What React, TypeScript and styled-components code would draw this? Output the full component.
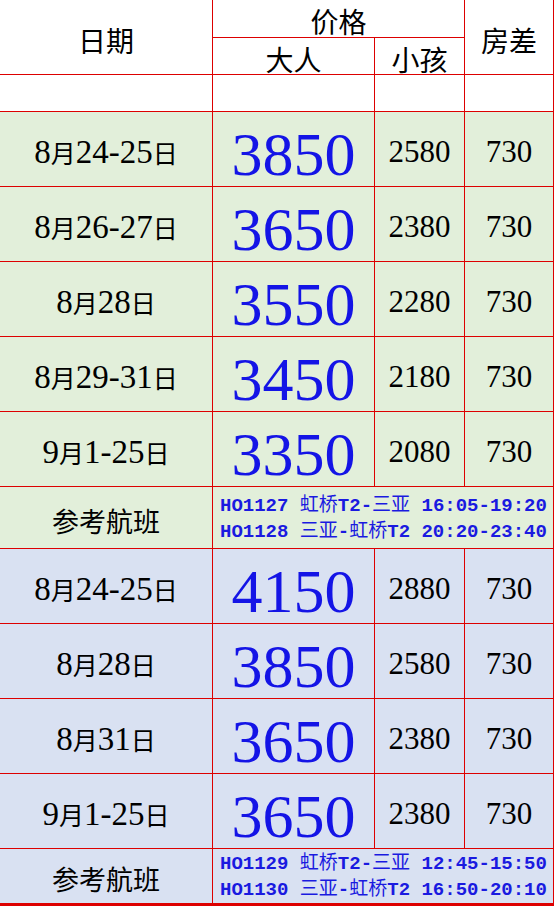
import React from "react";
import styled, { createGlobalStyle } from "styled-components";

const Global = createGlobalStyle`
  html, body { margin: 0; padding: 0; background: #ffffff; }
  body { font-family: "Noto Sans CJK SC", "Liberation Serif", sans-serif; color: #000; }
`;

const RED = "#dd0000";
const GREEN = "#e2efda";
const BLUE = "#d9e1f2";

const Sheet = styled.div`
  display: grid;
  grid-template-columns: 213px 162px 90px 89px;
  grid-template-rows: 38px 37px 37px repeat(5, 75px) 62px repeat(4, 75px) 57px;
  width: 554px;
`;

const Cell = styled.div<{
  $bg?: string;
  $colSpan?: number;
  $rowSpan?: number;
  $thick?: boolean;
  $padTop?: number;
}>`
  box-sizing: border-box;
  display: flex;
  align-items: center;
  justify-content: center;
  padding-top: ${(p) => p.$padTop ?? 0}px;
  background: ${(p) => p.$bg || "#ffffff"};
  border-right: 1px solid ${RED};
  border-bottom: ${(p) => (p.$thick ? 3 : 1)}px solid ${RED};
  grid-column: span ${(p) => p.$colSpan || 1};
  grid-row: span ${(p) => p.$rowSpan || 1};
`;

const HeadText = styled.span`
  font-family: "Noto Sans CJK SC", sans-serif;
  font-size: 28px;
  line-height: 28px;
  white-space: nowrap;
`;

const DateText = styled.span`
  font-family: "Noto Sans CJK SC", sans-serif;
  font-size: 25px;
  line-height: 34px;
  white-space: nowrap;
`;

const Latin = styled.span<{ $size: number }>`
  font-family: "Liberation Serif", serif;
  font-size: ${(p) => p.$size}px;
`;

const BigPrice = styled.span`
  font-family: "Liberation Serif", serif;
  font-size: 62px;
  line-height: 62px;
  color: #1414e6;
`;

const SmallPrice = styled.span`
  font-family: "Liberation Serif", serif;
  font-size: 31px;
  line-height: 32px;
`;

const FlightCell = styled(Cell)`
  flex-direction: column;
  align-items: flex-start;
  justify-content: center;
  padding-left: 7px;
`;

const FlightLine = styled.div`
  font-family: "Liberation Mono", "Noto Sans CJK SC", monospace;
  font-size: 19px;
  line-height: 26px;
  color: #1a1ae0;
  white-space: pre;
`;

const AsciiBold = styled.span`
  font-weight: 700;
`;

const FlightLabel = styled.span`
  font-family: "Noto Sans CJK SC", sans-serif;
  font-size: 27px;
  line-height: 28px;
  white-space: nowrap;
`;

function Mixed({ text, latin }: { text: string; latin: number }) {
  const parts = text.split(/([\x00-\x7f]+)/).filter(Boolean);
  return (
    <>
      {parts.map((p, i) =>
        /^[\x00-\x7f]+$/.test(p) ? (
          <Latin key={i} $size={latin}>
            {p}
          </Latin>
        ) : (
          <span key={i}>{p}</span>
        )
      )}
    </>
  );
}

function FlightText({ text }: { text: string }) {
  const parts = text.split(/([\x00-\x7f]+)/).filter(Boolean);
  return (
    <>
      {parts.map((p, i) =>
        /^[\x00-\x7f]+$/.test(p) ? <AsciiBold key={i}>{p}</AsciiBold> : <span key={i}>{p}</span>
      )}
    </>
  );
}

type Row = { date: string; adult: string; child: string; room: string };

const groups: { bg: string; rows: Row[]; flights: string[] }[] = [
  {
    bg: GREEN,
    rows: [
      { date: "8月24-25日", adult: "3850", child: "2580", room: "730" },
      { date: "8月26-27日", adult: "3650", child: "2380", room: "730" },
      { date: "8月28日", adult: "3550", child: "2280", room: "730" },
      { date: "8月29-31日", adult: "3450", child: "2180", room: "730" },
      { date: "9月1-25日", adult: "3350", child: "2080", room: "730" },
    ],
    flights: ["HO1127 虹桥T2-三亚 16:05-19:20", "HO1128 三亚-虹桥T2 20:20-23:40"],
  },
  {
    bg: BLUE,
    rows: [
      { date: "8月24-25日", adult: "4150", child: "2880", room: "730" },
      { date: "8月28日", adult: "3850", child: "2580", room: "730" },
      { date: "8月31日", adult: "3650", child: "2380", room: "730" },
      { date: "9月1-25日", adult: "3650", child: "2380", room: "730" },
    ],
    flights: ["HO1129 虹桥T2-三亚 12:45-15:50", "HO1130 三亚-虹桥T2 16:50-20:10"],
  },
];

export default function App() {
  return (
    <>
      <Global />
      <Sheet>
        <Cell $rowSpan={2} $padTop={6}>
          <HeadText>日期</HeadText>
        </Cell>
        <Cell $colSpan={2} $padTop={5}>
          <HeadText>价格</HeadText>
        </Cell>
        <Cell $rowSpan={2} $padTop={6}>
          <HeadText>房差</HeadText>
        </Cell>
        <Cell $padTop={6}>
          <HeadText>大人</HeadText>
        </Cell>
        <Cell $padTop={6}>
          <HeadText>小孩</HeadText>
        </Cell>
        <Cell />
        <Cell />
        <Cell />
        <Cell />
        {groups.map((g, gi) => (
          <React.Fragment key={gi}>
            {g.rows.map((r, ri) => (
              <React.Fragment key={ri}>
                <Cell $bg={g.bg} $padTop={6}>
                  <DateText>
                    <Mixed text={r.date} latin={33} />
                  </DateText>
                </Cell>
                <Cell $bg={g.bg} $padTop={10}>
                  <BigPrice>{r.adult}</BigPrice>
                </Cell>
                <Cell $bg={g.bg} $padTop={6}>
                  <SmallPrice>{r.child}</SmallPrice>
                </Cell>
                <Cell $bg={g.bg} $padTop={6}>
                  <SmallPrice>{r.room}</SmallPrice>
                </Cell>
              </React.Fragment>
            ))}
            <Cell $bg={g.bg} $thick={gi === groups.length - 1} $padTop={6}>
              <FlightLabel>参考航班</FlightLabel>
            </Cell>
            <FlightCell
              $bg={g.bg}
              $colSpan={3}
              $thick={gi === groups.length - 1}
              $padTop={2}
            >
              {g.flights.map((f, fi) => (
                <FlightLine key={fi}>
                  <FlightText text={f} />
                </FlightLine>
              ))}
            </FlightCell>
          </React.Fragment>
        ))}
      </Sheet>
    </>
  );
}
